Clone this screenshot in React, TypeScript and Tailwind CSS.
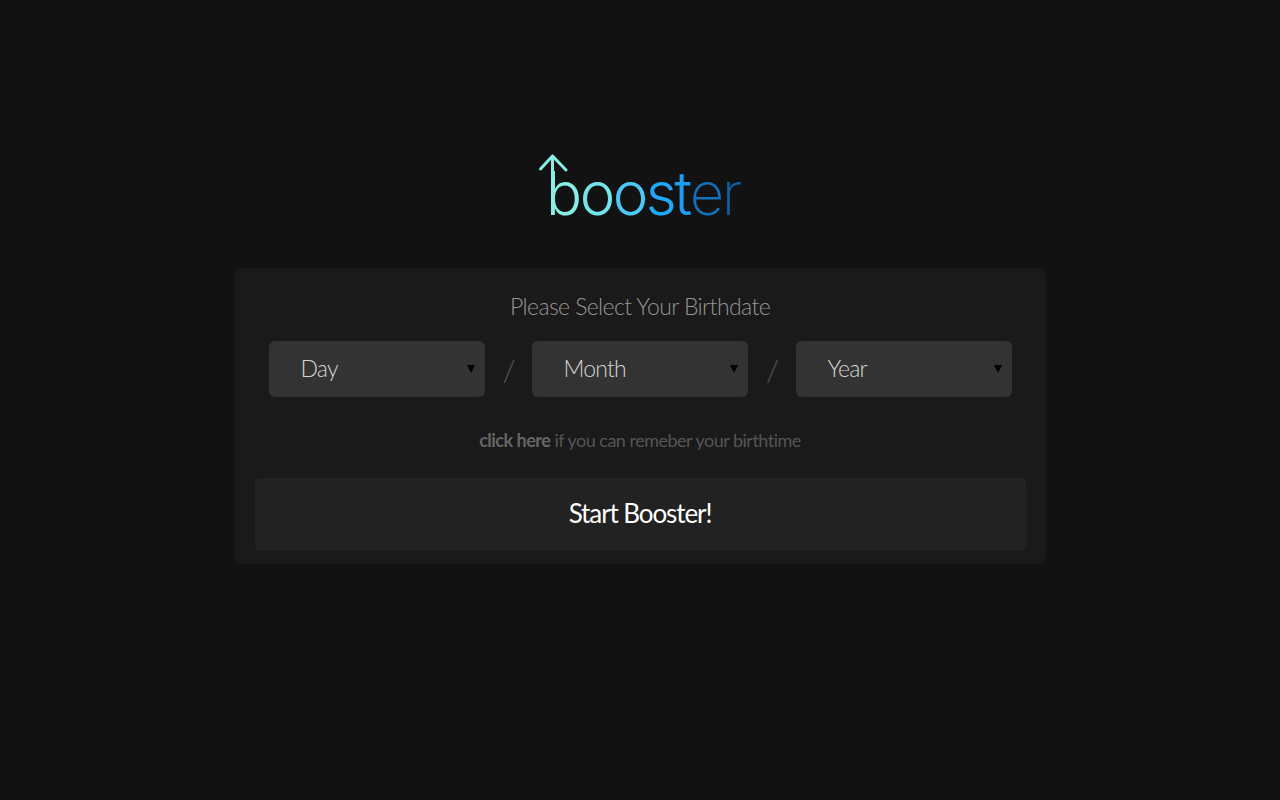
export default function App() {
  const letters: [string, string][] = [
    ["b", "text-[#86f0e6] font-light"],
    ["o", "text-[#72e4ea] font-light"],
    ["o", "text-[#4cc8f6] font-light"],
    ["s", "text-[#1ea8ff] font-[350]"],
    ["t", "text-[#1c9ef8] font-[350]"],
    ["e", "text-[#0f72bd] font-extralight"],
    ["r", "text-[#0b62a4] font-extralight"],
  ];
  const selects = ["Day", "Month", "Year"];
  return (
    <div className="min-h-[800px] bg-[#121212] flex flex-col items-center pt-[145px] font-['Lato',sans-serif]">
      <div className="relative h-[123px] w-[204px]">
        <svg className="absolute left-0 top-[8px]" width="40" height="64" viewBox="0 0 40 64" fill="none">
          <path d="M2.5 16 L14.5 3 L28 17 M14.5 3 V60" stroke="#86f0e6" strokeWidth="3" strokeLinecap="round" strokeLinejoin="round" />
        </svg>
        <div className="absolute left-[8px] top-[18px] flex text-[60px] leading-[60px] font-['Inter',sans-serif] tracking-[-2.5px]">
          {letters.map(([l, c], i) => (
            <span key={i} className={c}>{l}</span>
          ))}
        </div>
      </div>
      <div className="w-[811px] h-[296px] bg-[#1a1a1a] rounded-[6px] px-[20px] flex flex-col items-center">
        <div className="mt-[23px] h-[30px] leading-[30px] text-[23px] font-light tracking-[-0.6px] text-[#969696]">Please Select Your Birthdate</div>
        <div className="mt-[20px] flex items-center">
          {selects.map((s, i) => (
            <div key={s} className="flex items-center">
              {i > 0 && (
                <span className={`pl-[2px] text-center text-[30px] font-light text-[#555555] ${i === 1 ? "w-[47px]" : "w-[48px]"}`}>/</span>
              )}
              <div className="relative">
                <select
                  defaultValue={s}
                  className="block w-[216px] h-[56px] appearance-none rounded-[6px] bg-[#333333] pl-[32px] pr-[8px] pb-[2px] text-[23px] font-light tracking-[-0.8px] text-[#d4d4d4] outline-none"
                  aria-label={s}
                >
                  <option>{s}</option>
                </select>
                <svg className="absolute right-[10px] top-[24px] pointer-events-none" width="8" height="8" viewBox="0 0 8 8">
                  <path d="M0 0 H8 L4 8 Z" fill="#000000" />
                </svg>
              </div>
            </div>
          ))}
        </div>
        <div className="mt-[32px] h-[22px] leading-[22px] text-[18px] tracking-[-0.5px] text-[#555555]">
          <b className="font-bold text-[#666666]">click here</b> if you can remeber your birthtime
        </div>
        <button className="mt-[27px] w-[771px] h-[73px] rounded-[5px] bg-[#222222] pb-[2px] text-[26px] font-normal tracking-[-1.1px] text-white">
          Start Booster!
        </button>
      </div>
    </div>
  );
}
